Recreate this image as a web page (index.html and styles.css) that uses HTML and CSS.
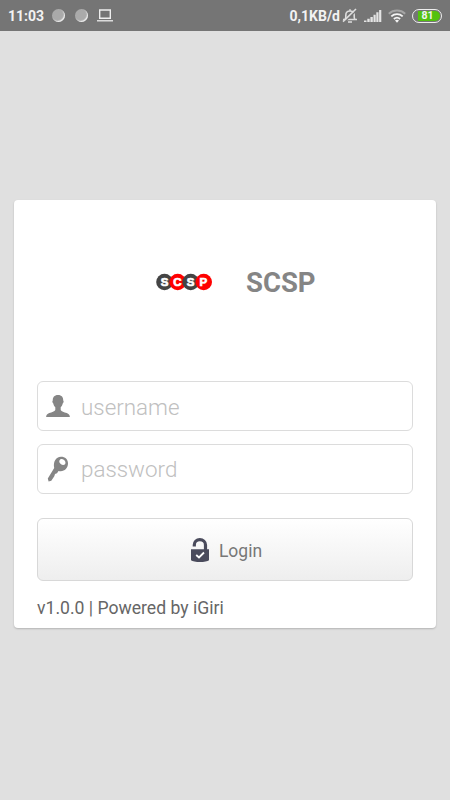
FILE: index.html
```
<!DOCTYPE html>
<html lang="en">
  <head>
    <meta charset="utf-8">
    <title>SCSP</title>
    <link rel="stylesheet" href="styles.css">
  </head>
  <body>
    <header class="status-bar">
      <span class="clock">11:03</span>
      <span class="dot"></span>
      <span class="dot"></span>
      <svg class="laptop" width="16" height="13" viewBox="0 0 16 13">
        <path d="M2.7 1h10.6v8.2H2.7z" fill="none" stroke="#eee" stroke-width="1.4"/>
        <path d="M0 11.8h16" stroke="#eee" stroke-width="1.3"/>
      </svg>
      <span class="speed">0,1KB/d</span>
      <svg class="bell" width="16" height="16" viewBox="0 0 16 16" fill="none" stroke="#ddd" stroke-width="1.6">
        <path d="M1 11.500h14M3.200 11.300c.8-1 .6-2.500.6-4C3.800 4.300 5.400 3 8 3s4.200 1.300 4.200 4.300c0 1.500-.2 3 .6 4M6 14h4M8 1.300v1.700"/>
        <path d="M2.200 14.300L15 2" stroke="#757575" stroke-width="1.500"/>
        <path d="M1 13.600L14 1"/>
      </svg>
      <svg class="signal" width="18" height="14" viewBox="0 0 18 14" fill="#e4e4e4">
        <path d="M0 13v-1.500h2.500V13zM3.300 13v-3.200h2.400V13zM6.400 13V8h2.400v5zM9.500 13V5.700h2.200V13zM12.300 13V3.300h2.200V13zM15.100 13V1h2.200v12z"/>
      </svg>
      <svg class="wifi" width="18" height="14" viewBox="0 0 18 14" fill="none" stroke="#f4f4f4" stroke-width="1.900">
        <path d="M.8 4.700c4.600-4.200 11.800-4.200 16.400 0" stroke="#a5a5a5"/>
        <path d="M3.300 7.400c3.300-3 8.100-3 11.400 0M5.900 10c1.800-1.600 4.400-1.600 6.200 0"/>
        <path d="M7 11.400c1.200-1 2.800-1 4 0l-2 2.300z" fill="#f4f4f4" stroke="none"/>
      </svg>
      <span class="battery"><span class="level">81</span></span>
    </header>
    <main>
      <form class="card">
        <div class="brand">
          <svg class="logo" width="58" height="18" viewBox="0 0 58 18">
            <circle cx="8.500" cy="9" r="8.300" fill="#444"/>
            <circle cx="21.700" cy="9" r="8.300" fill="#f00"/>
            <circle cx="34.700" cy="9" r="8.300" fill="#444"/>
            <circle cx="47.700" cy="9" r="8.300" fill="#f00"/>
            <g class="logo-letters">
              <text x="8.500" y="13">S</text>
              <text x="21.300" y="13">C</text>
              <text x="34.700" y="13">S</text>
              <text x="47.300" y="13">P</text>
            </g>
          </svg>
          <h1>SCSP</h1>
        </div>
        <label class="field username">
          <svg width="24" height="24" viewBox="0 0 24 24" fill="#858585">
            <path d="M12 1c3.700 0 5.400 2.300 5.200 5.600.8.500.4 2.300-.5 2.900-.4 1.900-1 2.900-2 3.800v2.600c.7 1.700 3.400 2.200 6 3.200 2 .8 3 1.700 3.200 4H.1c.200-2.300 1.200-3.200 3.200-4 2.600-1 5.300-1.500 6-3.200v-2.600c-1-.9-1.600-1.900-2-3.800-.9-.6-1.300-2.400-.5-2.900C6.600 3.300 8.300 1 12 1z"/>
          </svg>
          <input type="text" placeholder="username">
        </label>
        <label class="field">
          <svg width="24" height="26" viewBox="0 0 24 26">
            <path fill="#858585" fill-rule="evenodd" d="M15 .8c4.100 0 7 2.700 7 6.700 0 4.300-3.200 7.700-7.300 7.700-.8 0-1.500-.1-2.200-.3L11 17.300l-2 .8-.7 2.200-3 4.500-2.700.6-.8-3L8.200 12C7 6.100 9.700.8 15 .8zM14.200 3.400c-1.400 1-1.200 3 .3 4.400s3.600 1.600 4.500.4.500-3-.9-4.200-2.900-1.400-3.900-.6z"/>
          </svg>
          <input type="password" placeholder="password">
        </label>
        <button type="button" class="login">
          <svg width="20" height="25" viewBox="0 0 20 25">
            <path d="M4.300 8.500V7c0-3.300 2.300-5.300 5.500-5.300S15.500 3.700 15.500 7v5" fill="none" stroke="#4a4b5c" stroke-width="3.200"/>
            <path d="M1 11.300h18v11c-2.500 2.400-15.500 2.400-18 0z" fill="#4a4b5c"/>
            <path d="M6.200 17l2.800 2.500 5-5" fill="none" stroke="#fff" stroke-width="1.800"/>
          </svg>
          <span>Login</span>
        </button>
        <p class="version">v1.0.0 | Powered by iGiri</p>
      </form>
    </main>
  </body>
</html>
```
FILE: styles.css
```
* {
  margin: 0;
  padding: 0;
  box-sizing: border-box;
}

body {
  background-color: #e0e0e0;
  font-family: Roboto, sans-serif;
  height: 800px;
  overflow: hidden;
}

.status-bar {
  display: flex;
  align-items: center;
  background-color: #757575;
  color: #f2f2f2;
  height: 31px;
  padding: 0 8px;
}

.clock {
  font-size: 14px;
  font-weight: 700;
  width: 44px;
}

.dot {
  background-color: #aaa;
  border-radius: 50%;
  box-shadow: inset -1px -1px 1px #eee;
  width: 13px;
  height: 13px;
  margin-right: 9.500px;
}

.speed {
  font-size: 14px;
  font-weight: 700;
  margin-left: auto;
}

.bell {
  margin-left: 2px;
}

.signal {
  margin-left: 6px;
}

.wifi {
  margin-left: 6px;
}

.battery {
  border: 1.500px solid #eee;
  border-radius: 7px;
  width: 30px;
  height: 14px;
  margin-left: 6px;
  padding: 1px 1px 1px 5px;
}

.level {
  display: block;
  background-color: #53c20f;
  border-radius: 0 5px 5px 0;
  font-size: 10.500px;
  font-weight: 700;
  line-height: 10px;
  padding-right: 3px;
  text-align: center;
}

.card {
  background-color: white;
  border-radius: 4px;
  box-shadow: 0 1px 2px rgba(0, 0, 0, 0.2);
  width: 422px;
  height: 428px;
  margin: 169px 14px 0 14px;
  padding: 0 23px;
}

.brand {
  display: flex;
  align-items: center;
  height: 181px;
  padding: 0 0 17px 119px;
}

.logo-letters {
  fill: white;
  stroke: white;
  stroke-width: 0.700px;
  font-family: "Liberation Sans", sans-serif;
  font-size: 11.500px;
  font-weight: 700;
  text-anchor: middle;
}

h1 {
  color: #858585;
  font-size: 27.500px;
  font-weight: 700;
  margin-left: 32px;
}

.field {
  display: flex;
  align-items: center;
  border: 1px solid #dcdcdc;
  border-radius: 6px;
  height: 50px;
  margin-bottom: 13px;
  padding-left: 8px;
}

.field input {
  background: none;
  border: none;
  outline: none;
  flex: 1;
  font-family: Roboto, sans-serif;
  font-size: 22.400px;
  font-weight: 300;
  margin-left: 11px;
}

.username input {
  padding-top: 2px;
}

.field input::placeholder {
  color: #c0c0c0;
}

.login {
  display: flex;
  align-items: center;
  justify-content: center;
  background: linear-gradient(#fff, #eee);
  border: 1px solid #d8d8d8;
  border-radius: 6px;
  color: #777;
  font-family: Roboto, sans-serif;
  font-size: 17.500px;
  gap: 9px;
  width: 100%;
  height: 63px;
  margin-top: 24px;
  padding: 2px 0 0 2px;
}

.version {
  color: #666;
  font-size: 17.600px;
  line-height: 20px;
  margin-top: 17px;
}
```
